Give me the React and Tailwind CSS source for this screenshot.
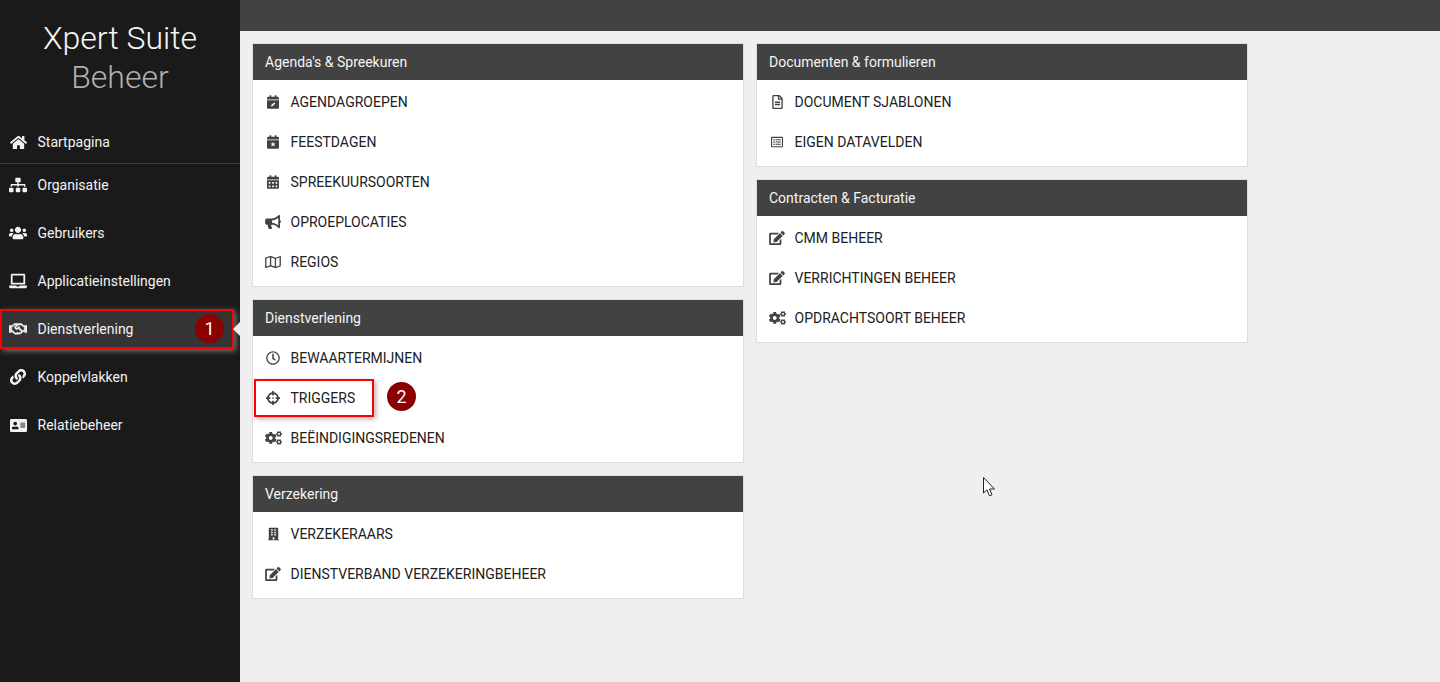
import React from "react";
import {
  FaHome, FaSitemap, FaUsers, FaLaptop, FaRegHandshake, FaLink, FaAddressCard,
  FaCalendarAlt, FaBullhorn, FaRegMap, FaRegClock, FaCrosshairs,
  FaCogs, FaBuilding, FaEdit, FaRegFileAlt, FaRegListAlt,
} from "react-icons/fa";

function CalendarPen({ className }) {
  return (
    <svg viewBox="0 0 448 512" className={className} fill="currentColor">
      <path d="M148 0c7 0 12 5 12 12v52h128V12c0-7 5-12 12-12h40c7 0 12 5 12 12v52h48c26 0 48 22 48 48v48H0v-48c0-26 22-48 48-48h48V12c0-7 5-12 12-12h40zM0 192h448v272c0 26-22 48-48 48H48c-26 0-48-22-48-48V192z" />
      <path fill="#fff" d="M270 270l44 44-110 100-52 8 8-52z" />
    </svg>
  );
}
function CalendarStar({ className }) {
  return (
    <svg viewBox="0 0 448 512" className={className} fill="currentColor">
      <path d="M148 0c7 0 12 5 12 12v52h128V12c0-7 5-12 12-12h40c7 0 12 5 12 12v52h48c26 0 48 22 48 48v48H0v-48c0-26 22-48 48-48h48V12c0-7 5-12 12-12h40zM0 192h448v272c0 26-22 48-48 48H48c-26 0-48-22-48-48V192z" />
      <path fill="#fff" d="M224 250l27 58 63 8-46 43 12 63-56-31-56 31 12-63-46-43 63-8z" />
    </svg>
  );
}

const nav = [
  { label: "Organisatie", Icon: FaSitemap, size: "w-[18px] h-[18px]" },
  { label: "Gebruikers", Icon: FaUsers, size: "w-[18px] h-[18px]" },
  { label: "Applicatieinstellingen", Icon: FaLaptop, size: "w-[18px] h-[18px]" },
  { label: "Dienstverlening", Icon: FaRegHandshake, size: "w-[18px] h-[18px] stroke-current stroke-[18px]", active: true },
  { label: "Koppelvlakken", Icon: FaLink, size: "w-[16px] h-[16px] ml-[1px]" },
  { label: "Relatiebeheer", Icon: FaAddressCard, size: "w-[17px] h-[17px] ml-[1px]" },
];

const cal = "w-[12px] h-[14px]";
const wide = "w-[16px] h-[14px]";
const gears = "w-[17px] h-[14px]";

const columns = [
  [
    {
      title: "Agenda's & Spreekuren",
      items: [
        ["AGENDAGROEPEN", CalendarPen, cal],
        ["FEESTDAGEN", CalendarStar, cal],
        ["SPREEKUURSOORTEN", FaCalendarAlt, cal],
        ["OPROEPLOCATIES", FaBullhorn, wide],
        ["REGIOS", FaRegMap, wide],
      ],
    },
    {
      title: "Dienstverlening",
      items: [
        ["BEWAARTERMIJNEN", FaRegClock, "w-[14px] h-[14px]"],
        ["TRIGGERS", FaCrosshairs, "w-[14px] h-[14px]"],
        ["BEËINDIGINGSREDENEN", FaCogs, gears],
      ],
    },
    {
      title: "Verzekering",
      items: [
        ["VERZEKERAARS", FaBuilding, "w-[11px] h-[14px]"],
        ["DIENSTVERBAND VERZEKERINGBEHEER", FaEdit, wide],
      ],
    },
  ],
  [
    {
      title: "Documenten & formulieren",
      items: [
        ["DOCUMENT SJABLONEN", FaRegFileAlt, "w-[11px] h-[14px]"],
        ["EIGEN DATAVELDEN", FaRegListAlt, "w-[12px] h-[12px]"],
      ],
    },
    {
      title: "Contracten & Facturatie",
      items: [
        ["CMM BEHEER", FaEdit, wide],
        ["VERRICHTINGEN BEHEER", FaEdit, wide],
        ["OPDRACHTSOORT BEHEER", FaCogs, gears],
      ],
    },
  ],
];

function Panel({ title, items }) {
  return (
    <section className="bg-white border border-[#dcdde3] pb-[4px]">
      <h2 className="h-[36px] bg-[#424242] text-[#f5f5f5] text-[14px] font-normal flex items-center px-[12px]">
        {title}
      </h2>
      <ul className="pt-[2px]">
        {items.map(([label, Icon, size]) => (
          <li key={label} className="h-[40px] flex items-center text-[14px] text-[#212121]">
            <span className="w-[37.5px] pl-[10px] pr-[7.5px] flex justify-center shrink-0">
              <Icon className={"text-[#424242] shrink-0 " + size} />
            </span>
            {label}
          </li>
        ))}
      </ul>
    </section>
  );
}

function Badge({ className, children }) {
  return (
    <span className={"absolute w-[29px] h-[29px] rounded-full bg-[#8b0000] text-white text-[18px] flex items-center justify-center " + className}>
      {children}
    </span>
  );
}

export default function App() {
  return (
    <div className="relative h-[682px] overflow-hidden flex bg-[#efefef] font-['Roboto',sans-serif]">
      <aside className="w-[240px] shrink-0 bg-[#1a1a1a] text-white">
        <div className="h-[120px] pt-[19px] text-center text-[32px] font-light leading-[39px]">
          <div className="text-[#f5f5f5]">Xpert Suite</div>
          <div className="text-[#b0b0b0]">Beheer</div>
        </div>
        <div className="h-[44px] flex items-center pl-[10px] pt-[1px] border-b border-[#3a3a3a] text-[14px] text-[#f2f2f2]">
          <span className="w-[27.5px] shrink-0">
            <FaHome className="w-[17px] h-[17px]" />
          </span>
          Startpagina
        </div>
        <nav>
          {nav.map(({ label, Icon, size, active }) => (
            <div
              key={label}
              className="relative h-[48px] flex items-center pl-[9px] text-[14px] text-[#f2f2f2] first:h-[45px] first:pb-[3px]"
            >
              {active && (
                <span className="absolute left-0 top-[4px] w-[234px] h-[40px] bg-[#343434] border-2 border-[#ff0000] shadow-[2px_2px_6px_rgba(255,255,255,0.4)]" />
              )}
              <span className="relative w-[28.5px] shrink-0">
                <Icon className={size} />
              </span>
              <span className="relative">{label}</span>
              {active && (
                <span className="absolute right-0 top-[17px] w-0 h-0 border-y-[7px] border-y-transparent border-r-[7px] border-r-[#efefef]" />
              )}
            </div>
          ))}
        </nav>
      </aside>
      <main className="flex-1 min-w-0">
        <div className="h-[31px] bg-[#424242]" />
        <div className="flex gap-[12px] pl-[12px] pt-[12px]">
          {columns.map((col, i) => (
            <div key={i} className="w-[492px] flex flex-col gap-[12px]">
              {col.map((p) => (
                <Panel key={p.title} {...p} />
              ))}
            </div>
          ))}
        </div>
      </main>

      <Badge className="left-[195px] top-[314px]">1</Badge>
      <div className="absolute left-[254px] top-[379px] w-[120px] h-[38px] border-2 border-[#ff0000] shadow-[2px_2px_5px_rgba(0,0,0,0.3)]" />
      <Badge className="left-[387px] top-[382px]">2</Badge>

      <svg className="absolute left-[983px] top-[477px]" width="13" height="20" viewBox="0 0 13 20">
        <path d="M0.5 0.5 L0.5 16 L4 12.8 L6.5 18.8 L9 17.8 L6.6 12 L11.5 12 Z" fill="#fff" stroke="#222" strokeWidth="1" />
      </svg>
    </div>
  );
}
